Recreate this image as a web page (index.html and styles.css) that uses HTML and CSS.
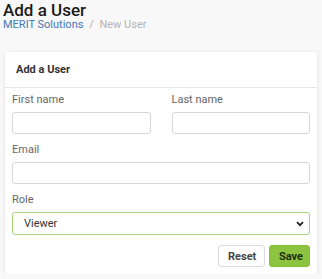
FILE: index.html
```html
<!DOCTYPE html>
<html lang="en">
<head>
    <meta charset="UTF-8">
    <meta name="viewport" content="width=device-width, initial-scale=1.0">
    <title>Add a User</title>
    <link rel="stylesheet" href="styles.css">
</head>
<body>
    <header>
        <h1>Add a User</h1>
        <nav class="breadcrumb">
            <a href="#">MERIT Solutions</a>
            <span class="sep">/</span>
            <span class="current">New User</span>
        </nav>
    </header>
    <main>
        <form class="card" id="formUser">
            <div class="card-header">Add a User</div>
            <div class="card-body">
                <div class="row">
                    <div class="field">
                        <label for="nombre">First name</label>
                        <input type="text" id="nombre" name="nombre">
                    </div>
                    <div class="field">
                        <label for="apellido">Last name</label>
                        <input type="text" id="apellido" name="apellido">
                    </div>
                </div>
                <div class="field">
                    <label for="email">Email</label>
                    <input type="email" id="email" name="email">
                </div>
                <div class="field">
                    <label for="role">Role</label>
                    <div class="select">
                        <select id="role" name="role">
                            <option>Viewer</option>
                            <option>Editor</option>
                            <option>Admin</option>
                        </select>
                        <svg class="chevron" width="8" height="6" viewBox="0 0 8 6">
                            <path d="M1 1.2 L4 4.2 L7 1.2" fill="none" stroke="#222" stroke-width="1.8"/>
                        </svg>
                    </div>
                </div>
                <div class="botones">
                    <button type="reset" id="reset">Reset</button>
                    <button type="submit" id="save">Save</button>
                </div>
            </div>
        </form>
    </main>
</body>
</html>
```

FILE: styles.css
```css
* {
    margin: 0;
    padding: 0;
    box-sizing: border-box;
    font-family: Roboto, "Liberation Sans", Arial, sans-serif;
}

body {
    background-color: #f8f8f8;
    padding: 0 5px;
}

header {
    margin-left: -2px;
}

h1 {
    font-size: 17px;
    line-height: 17px;
    padding-top: 2px;
    font-weight: 500;
    color: #1b1b1b;
}

.breadcrumb {
    font-size: 11px;
    line-height: 12px;
    color: #b3b3b3;

    a {
        color: #3f79b8;
        text-decoration: none;
    }

    .sep {
        margin: 0 3px;
    }
}

.card {
    margin-top: 21px;
    background-color: #fff;
    border-radius: 3px;
    box-shadow: 0 1px 4px rgba(0, 0, 0, 0.1);
}

.card-header {
    padding: 10px 11px;
    font-size: 11px;
    line-height: 15px;
    font-weight: 700;
    color: #333;
    border-bottom: 1px solid #e6e6e6;
}

.card-body {
    padding: 5px 7px 7px;
    display: flex;
    flex-direction: column;
    gap: 9px;
}

.row {
    display: flex;
    gap: 21px;

    .field {
        flex: 1;
        min-width: 0;
    }
}

.field {
    display: flex;
    flex-direction: column;
    gap: 5px;
}

label {
    font-size: 11px;
    line-height: 14px;
    color: #666;
}

input {
    width: 100%;
    height: 22px;
    border: 1px solid #d6d6d6;
    border-radius: 3px;
    background: #fff;
    padding: 0 8px;
    font-size: 11px;
}

.select {
    position: relative;

    select {
        width: 100%;
        height: 23px;
        border: 1px solid #a9d67a;
        border-radius: 3px;
        background: #fff;
        padding: 0 11px;
        font-size: 11px;
        color: #333;
        appearance: none;
    }

    .chevron {
        position: absolute;
        right: 6px;
        top: 9px;
    }
}

.botones {
    display: flex;
    justify-content: flex-end;
    gap: 4px;
    margin-top: 1px;
}

button {
    height: 22px;
    border-radius: 3px;
    font-size: 11px;
    font-weight: 700;
    padding: 0 9px;
    cursor: pointer;
}

#reset {
    background-color: #fff;
    border: 1px solid #dcdcdc;
    color: #444;
    width: 47px;
}

#save {
    background-color: #8cc43f;
    border: 1px solid #84bd3a;
    color: #1e2e12;
    width: 41px;
}
```
